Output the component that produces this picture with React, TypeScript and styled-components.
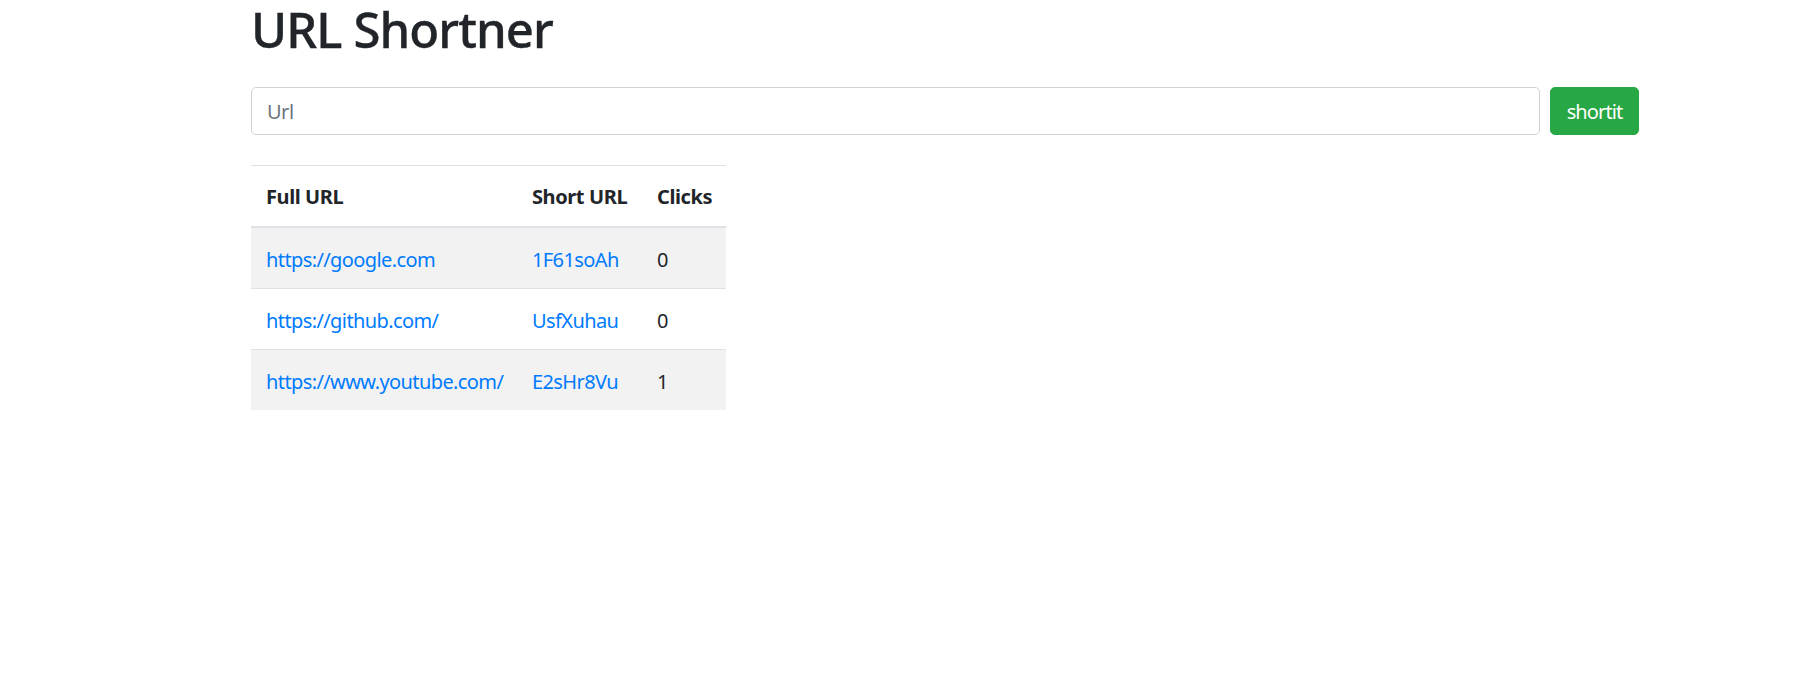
import React from "react";
import styled, { createGlobalStyle } from "styled-components";

const GlobalStyle = createGlobalStyle`
  html, body {
    margin: 0;
    padding: 0;
    background: #ffffff;
  }
  body {
    font-family: "Noto Sans", "Open Sans", sans-serif;
    color: #212529;
    font-size: 20px;
    line-height: 1.5;
  }
`;

const Container = styled.div`
  width: 1388px;
  margin-left: 251px;
`;

const Title = styled.h1`
  margin: 0 0 29px 0;
  font-size: 49px;
  font-weight: 500;
  line-height: 58px;
  letter-spacing: -0.9px;
  color: #212529;
  -webkit-text-stroke: 0.35px #212529;
`;

const Form = styled.form`
  display: flex;
  align-items: stretch;
  gap: 10px;
  margin-bottom: 30px;
`;

const Input = styled.input`
  flex: 1;
  height: 48px;
  box-sizing: border-box;
  border: 1px solid #ced4da;
  border-radius: 5px;
  padding: 0 15px;
  font-family: inherit;
  font-size: 20px;
  letter-spacing: -0.5px;
  color: #495057;
  outline: none;
  &::placeholder {
    color: #6c757d;
  }
`;

const Button = styled.button`
  width: 89px;
  height: 48px;
  box-sizing: border-box;
  border: 1px solid #28a745;
  background: #28a745;
  color: #ffffff;
  border-radius: 5px;
  font-family: inherit;
  font-size: 20px;
  letter-spacing: -0.9px;
  padding: 0;
  cursor: pointer;
`;

const Table = styled.table`
  border-collapse: collapse;
  table-layout: fixed;
  width: 475px;
`;

const Th = styled.th<{ $w: number }>`
  width: ${(p) => p.$w}px;
  box-sizing: border-box;
  text-align: left;
  font-weight: 700;
  padding: 16px 15px 14px 15px;
  line-height: 30px;
  letter-spacing: -0.4px;
  border-top: 1px solid #dee2e6;
  border-bottom: 2px solid #dee2e6;
  white-space: nowrap;
`;

const Row = styled.tr<{ $striped: boolean }>`
  background: ${(p) => (p.$striped ? "#f2f2f2" : "transparent")};
`;

const Td = styled.td`
  padding: 17px 15px 13px 15px;
  line-height: 30px;
  letter-spacing: -0.6px;
  border-top: 1px solid #dee2e6;
  white-space: nowrap;
`;

const Link = styled.a`
  color: #007bff;
  text-decoration: none;
`;

const rows = [
  { full: "https://google.com", short: "1F61soAh", clicks: 0 },
  { full: "https://github.com/", short: "UsfXuhau", clicks: 0 },
  { full: "https://www.youtube.com/", short: "E2sHr8Vu", clicks: 1 },
];

export default function App() {
  return (
    <>
      <GlobalStyle />
      <Container>
        <Title>URL Shortner</Title>
        <Form onSubmit={(e) => e.preventDefault()}>
          <Input type="url" placeholder="Url" />
          <Button type="submit">shortit</Button>
        </Form>
        <Table>
          <thead>
            <tr>
              <Th $w={266}>Full URL</Th>
              <Th $w={125}>Short URL</Th>
              <Th $w={84}>Clicks</Th>
            </tr>
          </thead>
          <tbody>
            {rows.map((r, i) => (
              <Row key={r.short} $striped={i % 2 === 0}>
                <Td>
                  <Link href={r.full}>{r.full}</Link>
                </Td>
                <Td>
                  <Link href={r.short}>{r.short}</Link>
                </Td>
                <Td>{r.clicks}</Td>
              </Row>
            ))}
          </tbody>
        </Table>
      </Container>
    </>
  );
}
